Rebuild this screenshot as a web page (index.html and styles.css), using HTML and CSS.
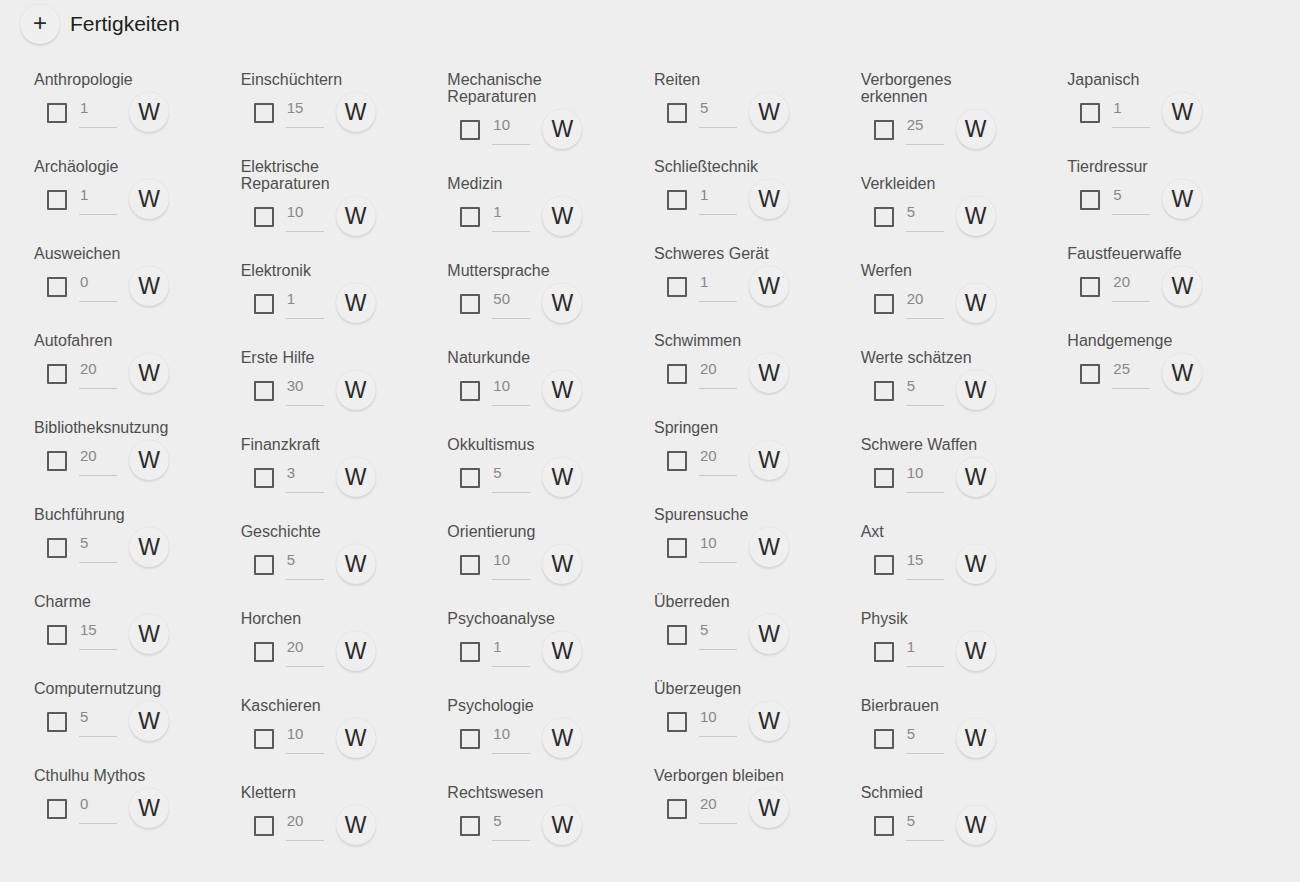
FILE: index.html
```html
<html>
    <head>
        <title>Fertigkeiten</title>
        <link rel="stylesheet" href="styles.css">
    </head>
<body>

    <header class="head">
        <button class="round-btn add-btn" type="button">+</button>
        <h2 class="head__title">Fertigkeiten</h2>
    </header>

    <main class="skills">
        <!-- Spalte 1 -->
        <div class="skills__col">
            <div class="skill"><label class="skill__name">Anthropologie</label><div class="skill__row"><span class="check"></span><input class="skill__val" value="1"><button class="round-btn roll-btn">W</button></div></div>
            <div class="skill"><label class="skill__name">Archäologie</label><div class="skill__row"><span class="check"></span><input class="skill__val" value="1"><button class="round-btn roll-btn">W</button></div></div>
            <div class="skill"><label class="skill__name">Ausweichen</label><div class="skill__row"><span class="check"></span><input class="skill__val" value="0"><button class="round-btn roll-btn">W</button></div></div>
            <div class="skill"><label class="skill__name">Autofahren</label><div class="skill__row"><span class="check"></span><input class="skill__val" value="20"><button class="round-btn roll-btn">W</button></div></div>
            <div class="skill"><label class="skill__name">Bibliotheksnutzung</label><div class="skill__row"><span class="check"></span><input class="skill__val" value="20"><button class="round-btn roll-btn">W</button></div></div>
            <div class="skill"><label class="skill__name">Buchführung</label><div class="skill__row"><span class="check"></span><input class="skill__val" value="5"><button class="round-btn roll-btn">W</button></div></div>
            <div class="skill"><label class="skill__name">Charme</label><div class="skill__row"><span class="check"></span><input class="skill__val" value="15"><button class="round-btn roll-btn">W</button></div></div>
            <div class="skill"><label class="skill__name">Computernutzung</label><div class="skill__row"><span class="check"></span><input class="skill__val" value="5"><button class="round-btn roll-btn">W</button></div></div>
            <div class="skill"><label class="skill__name">Cthulhu Mythos</label><div class="skill__row"><span class="check"></span><input class="skill__val" value="0"><button class="round-btn roll-btn">W</button></div></div>
        </div>

        <!-- Spalte 2 -->
        <div class="skills__col">
            <div class="skill"><label class="skill__name">Einschüchtern</label><div class="skill__row"><span class="check"></span><input class="skill__val" value="15"><button class="round-btn roll-btn">W</button></div></div>
            <div class="skill"><label class="skill__name">Elektrische Reparaturen</label><div class="skill__row"><span class="check"></span><input class="skill__val" value="10"><button class="round-btn roll-btn">W</button></div></div>
            <div class="skill"><label class="skill__name">Elektronik</label><div class="skill__row"><span class="check"></span><input class="skill__val" value="1"><button class="round-btn roll-btn">W</button></div></div>
            <div class="skill"><label class="skill__name">Erste Hilfe</label><div class="skill__row"><span class="check"></span><input class="skill__val" value="30"><button class="round-btn roll-btn">W</button></div></div>
            <div class="skill"><label class="skill__name">Finanzkraft</label><div class="skill__row"><span class="check"></span><input class="skill__val" value="3"><button class="round-btn roll-btn">W</button></div></div>
            <div class="skill"><label class="skill__name">Geschichte</label><div class="skill__row"><span class="check"></span><input class="skill__val" value="5"><button class="round-btn roll-btn">W</button></div></div>
            <div class="skill"><label class="skill__name">Horchen</label><div class="skill__row"><span class="check"></span><input class="skill__val" value="20"><button class="round-btn roll-btn">W</button></div></div>
            <div class="skill"><label class="skill__name">Kaschieren</label><div class="skill__row"><span class="check"></span><input class="skill__val" value="10"><button class="round-btn roll-btn">W</button></div></div>
            <div class="skill"><label class="skill__name">Klettern</label><div class="skill__row"><span class="check"></span><input class="skill__val" value="20"><button class="round-btn roll-btn">W</button></div></div>
        </div>

        <!-- Spalte 3 -->
        <div class="skills__col">
            <div class="skill"><label class="skill__name">Mechanische Reparaturen</label><div class="skill__row"><span class="check"></span><input class="skill__val" value="10"><button class="round-btn roll-btn">W</button></div></div>
            <div class="skill"><label class="skill__name">Medizin</label><div class="skill__row"><span class="check"></span><input class="skill__val" value="1"><button class="round-btn roll-btn">W</button></div></div>
            <div class="skill"><label class="skill__name">Muttersprache</label><div class="skill__row"><span class="check"></span><input class="skill__val" value="50"><button class="round-btn roll-btn">W</button></div></div>
            <div class="skill"><label class="skill__name">Naturkunde</label><div class="skill__row"><span class="check"></span><input class="skill__val" value="10"><button class="round-btn roll-btn">W</button></div></div>
            <div class="skill"><label class="skill__name">Okkultismus</label><div class="skill__row"><span class="check"></span><input class="skill__val" value="5"><button class="round-btn roll-btn">W</button></div></div>
            <div class="skill"><label class="skill__name">Orientierung</label><div class="skill__row"><span class="check"></span><input class="skill__val" value="10"><button class="round-btn roll-btn">W</button></div></div>
            <div class="skill"><label class="skill__name">Psychoanalyse</label><div class="skill__row"><span class="check"></span><input class="skill__val" value="1"><button class="round-btn roll-btn">W</button></div></div>
            <div class="skill"><label class="skill__name">Psychologie</label><div class="skill__row"><span class="check"></span><input class="skill__val" value="10"><button class="round-btn roll-btn">W</button></div></div>
            <div class="skill"><label class="skill__name">Rechtswesen</label><div class="skill__row"><span class="check"></span><input class="skill__val" value="5"><button class="round-btn roll-btn">W</button></div></div>
        </div>

        <!-- Spalte 4 -->
        <div class="skills__col">
            <div class="skill"><label class="skill__name">Reiten</label><div class="skill__row"><span class="check"></span><input class="skill__val" value="5"><button class="round-btn roll-btn">W</button></div></div>
            <div class="skill"><label class="skill__name">Schließtechnik</label><div class="skill__row"><span class="check"></span><input class="skill__val" value="1"><button class="round-btn roll-btn">W</button></div></div>
            <div class="skill"><label class="skill__name">Schweres Gerät</label><div class="skill__row"><span class="check"></span><input class="skill__val" value="1"><button class="round-btn roll-btn">W</button></div></div>
            <div class="skill"><label class="skill__name">Schwimmen</label><div class="skill__row"><span class="check"></span><input class="skill__val" value="20"><button class="round-btn roll-btn">W</button></div></div>
            <div class="skill"><label class="skill__name">Springen</label><div class="skill__row"><span class="check"></span><input class="skill__val" value="20"><button class="round-btn roll-btn">W</button></div></div>
            <div class="skill"><label class="skill__name">Spurensuche</label><div class="skill__row"><span class="check"></span><input class="skill__val" value="10"><button class="round-btn roll-btn">W</button></div></div>
            <div class="skill"><label class="skill__name">Überreden</label><div class="skill__row"><span class="check"></span><input class="skill__val" value="5"><button class="round-btn roll-btn">W</button></div></div>
            <div class="skill"><label class="skill__name">Überzeugen</label><div class="skill__row"><span class="check"></span><input class="skill__val" value="10"><button class="round-btn roll-btn">W</button></div></div>
            <div class="skill"><label class="skill__name">Verborgen bleiben</label><div class="skill__row"><span class="check"></span><input class="skill__val" value="20"><button class="round-btn roll-btn">W</button></div></div>
        </div>

        <!-- Spalte 5 -->
        <div class="skills__col">
            <div class="skill"><label class="skill__name">Verborgenes erkennen</label><div class="skill__row"><span class="check"></span><input class="skill__val" value="25"><button class="round-btn roll-btn">W</button></div></div>
            <div class="skill"><label class="skill__name">Verkleiden</label><div class="skill__row"><span class="check"></span><input class="skill__val" value="5"><button class="round-btn roll-btn">W</button></div></div>
            <div class="skill"><label class="skill__name">Werfen</label><div class="skill__row"><span class="check"></span><input class="skill__val" value="20"><button class="round-btn roll-btn">W</button></div></div>
            <div class="skill"><label class="skill__name">Werte schätzen</label><div class="skill__row"><span class="check"></span><input class="skill__val" value="5"><button class="round-btn roll-btn">W</button></div></div>
            <div class="skill"><label class="skill__name">Schwere Waffen</label><div class="skill__row"><span class="check"></span><input class="skill__val" value="10"><button class="round-btn roll-btn">W</button></div></div>
            <div class="skill"><label class="skill__name">Axt</label><div class="skill__row"><span class="check"></span><input class="skill__val" value="15"><button class="round-btn roll-btn">W</button></div></div>
            <div class="skill"><label class="skill__name">Physik</label><div class="skill__row"><span class="check"></span><input class="skill__val" value="1"><button class="round-btn roll-btn">W</button></div></div>
            <div class="skill"><label class="skill__name">Bierbrauen</label><div class="skill__row"><span class="check"></span><input class="skill__val" value="5"><button class="round-btn roll-btn">W</button></div></div>
            <div class="skill"><label class="skill__name">Schmied</label><div class="skill__row"><span class="check"></span><input class="skill__val" value="5"><button class="round-btn roll-btn">W</button></div></div>
        </div>

        <!-- Spalte 6 -->
        <div class="skills__col">
            <div class="skill"><label class="skill__name">Japanisch</label><div class="skill__row"><span class="check"></span><input class="skill__val" value="1"><button class="round-btn roll-btn">W</button></div></div>
            <div class="skill"><label class="skill__name">Tierdressur</label><div class="skill__row"><span class="check"></span><input class="skill__val" value="5"><button class="round-btn roll-btn">W</button></div></div>
            <div class="skill"><label class="skill__name">Faustfeuerwaffe</label><div class="skill__row"><span class="check"></span><input class="skill__val" value="20"><button class="round-btn roll-btn">W</button></div></div>
            <div class="skill"><label class="skill__name">Handgemenge</label><div class="skill__row"><span class="check"></span><input class="skill__val" value="25"><button class="round-btn roll-btn">W</button></div></div>
        </div>
    </main>

</body>
</html>
```

FILE: styles.css
```css
* {
    box-sizing: border-box;
    margin: 0;
    padding: 0;
}
body {
    background-color: #eeeeee;
    color: #4a4a4a;
    font-family: "Liberation Sans", Arial, sans-serif;
    font-size: 16px;
}

/* round buttons (add + roll) */
.round-btn {
    width: 40px;
    height: 40px;
    border: 0;
    border-radius: 50%;
    background-color: #efefef;
    box-shadow: 0 2px 2px rgba(0,0,0,0.09), 0 0 1px rgba(0,0,0,0.14);
    color: #2a2a2a;
    font-family: "Liberation Sans", Arial, sans-serif;
    display: flex;
    align-items: center;
    justify-content: center;
    flex-shrink: 0;
    cursor: pointer;
}

/* header */
.head {
    display: flex;
    align-items: center;
    gap: 10px;
    padding: 4px 20px 0;
}
.add-btn {
    font-size: 24px;
    line-height: 1;
    padding-bottom: 2px;
}
.head__title {
    font-size: 21px;
    font-weight: normal;
    color: #1e1e1e;
}

/* skills grid */
.skills {
    display: grid;
    grid-template-columns: repeat(6, 1fr);
    padding: 27px 26px 0 34px;
}
.skills__col {
    display: flex;
    flex-direction: column;
}
.skill {
    padding-bottom: 26px;
}
.skill__name {
    display: block;
    max-width: 140px;
    line-height: 17px;
    color: #4f4f4f;
}
.skill__row {
    display: flex;
    align-items: center;
    height: 40px;
    margin-top: 4px;
}
.check {
    width: 20px;
    height: 20px;
    border: 2px solid #5a5a5a;
    border-radius: 1px;
    margin-left: 13px;
    margin-top: 2px;
}
.skill__val {
    width: 38px;
    height: 31px;
    margin-left: 12px;
    padding: 2px 0 11px 1px;
    border: 0;
    border-bottom: 1px solid #c9c9c9;
    background: transparent;
    font-family: "Liberation Sans", Arial, sans-serif;
    font-size: 15px;
    line-height: 17px;
    color: #888;
    outline: none;
}
.roll-btn {
    margin-left: 12px;
    font-size: 23px;
}
```
